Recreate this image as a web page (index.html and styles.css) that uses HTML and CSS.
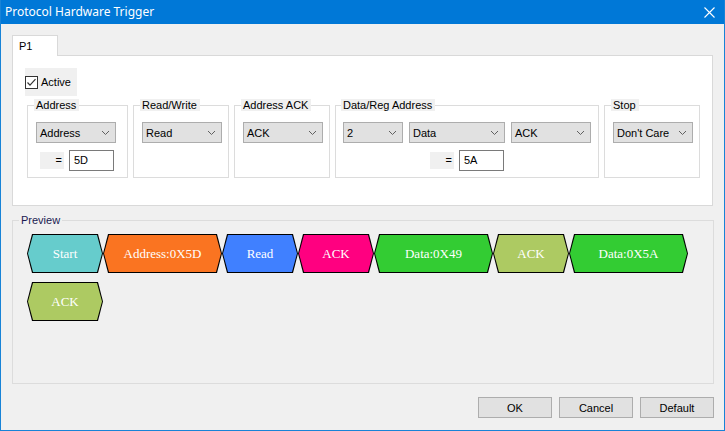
FILE: index.html
```html
<!DOCTYPE html>
<html>
<head>
<meta charset="utf-8">
<link rel="stylesheet" href="styles.css">
</head>
<body>
<div class="window">
  <div class="titlebar">
    <span class="title">Protocol Hardware Trigger</span>
    <svg class="close" width="11" height="11" viewBox="0 0 11 11"><path d="M0.5 0.5L10.5 10.5M10.5 0.5L0.5 10.5" stroke="#fff" stroke-width="1.1" fill="none"/></svg>
  </div>
  <div class="body">
    <div class="tabstrip"><div class="tab">P1</div><div class="tabfill"></div></div>
    <div class="panel">
      <div class="check"><span class="box"><svg width="11" height="11" viewBox="0 0 11 11"><path d="M1.5 5.5L4 8.2L9.5 2.2" stroke="#333" stroke-width="1.2" fill="none"/></svg></span>Active</div>
      <div class="groups">
        <fieldset class="grp g-addr">
          <legend>Address</legend>
          <div class="combo w80"><span>Address</span><svg class="chev" width="7" height="4" viewBox="0 0 7 4"><path d="M0 0L3.5 3.5L7 0" stroke="#606060" fill="none"/></svg></div>
          <div class="eqrow"><span class="eq">=</span><span class="field">5D</span></div>
        </fieldset>
        <fieldset class="grp g-rw">
          <legend>Read/Write</legend>
          <div class="combo w80"><span>Read</span><svg class="chev" width="7" height="4" viewBox="0 0 7 4"><path d="M0 0L3.5 3.5L7 0" stroke="#606060" fill="none"/></svg></div>
        </fieldset>
        <fieldset class="grp g-ack">
          <legend>Address ACK</legend>
          <div class="combo w80"><span>ACK</span><svg class="chev" width="7" height="4" viewBox="0 0 7 4"><path d="M0 0L3.5 3.5L7 0" stroke="#606060" fill="none"/></svg></div>
        </fieldset>
        <fieldset class="grp g-data">
          <legend>Data/Reg Address</legend>
          <div class="combos">
            <div class="combo w60"><span>2</span><svg class="chev" width="7" height="4" viewBox="0 0 7 4"><path d="M0 0L3.5 3.5L7 0" stroke="#606060" fill="none"/></svg></div>
            <div class="combo w96"><span>Data</span><svg class="chev" width="7" height="4" viewBox="0 0 7 4"><path d="M0 0L3.5 3.5L7 0" stroke="#606060" fill="none"/></svg></div>
            <div class="combo w80"><span>ACK</span><svg class="chev" width="7" height="4" viewBox="0 0 7 4"><path d="M0 0L3.5 3.5L7 0" stroke="#606060" fill="none"/></svg></div>
          </div>
          <div class="eqrow eq-data"><span class="eq">=</span><span class="field">5A</span></div>
        </fieldset>
        <fieldset class="grp g-stop">
          <legend>Stop</legend>
          <div class="combo w80"><span>Don't Care</span><svg class="chev" width="7" height="4" viewBox="0 0 7 4"><path d="M0 0L3.5 3.5L7 0" stroke="#606060" fill="none"/></svg></div>
        </fieldset>
      </div>
    </div>
    <fieldset class="preview">
      <legend>Preview</legend>
      <div class="blocks">
        <div class="blk short"><span class="c-start">Start</span></div>
        <div class="blk long"><span class="c-addr">Address:0X5D</span></div>
        <div class="blk short"><span class="c-read">Read</span></div>
        <div class="blk short"><span class="c-ack">ACK</span></div>
        <div class="blk long"><span class="c-data">Data:0X49</span></div>
        <div class="blk short"><span class="c-ack2">ACK</span></div>
        <div class="blk long"><span class="c-data">Data:0X5A</span></div>
        <div class="blk short"><span class="c-ack2">ACK</span></div>
      </div>
    </fieldset>
    <div class="buttons">
      <div class="btn">OK</div>
      <div class="btn">Cancel</div>
      <div class="btn">Default</div>
    </div>
  </div>
</div>
</body>
</html>
```
FILE: styles.css
```css
* { box-sizing: border-box; }
html, body { margin: 0; padding: 0; background: #f0f0f0; }

.window {
  width: 725px;
  height: 431px;
  background: #f0f0f0;
  border: 1px solid #1883d7;
  border-top: 0;
  display: flex;
  flex-direction: column;
  font-family: "Liberation Sans", Arial, sans-serif;
  font-size: 11px;
  color: #000;
}

.titlebar {
  height: 24px;
  flex: none;
  background: #0078d7;
  display: flex;
  align-items: center;
  justify-content: space-between;
  padding: 0 9px 0 4px;
  color: #fff;
}
.title { font-family: "Noto Sans", "Liberation Sans", sans-serif; font-size: 12px; line-height: 16px; }
.close { display: block; }

.body {
  flex: 1;
  display: flex;
  flex-direction: column;
  padding: 11px 10px 12px 11px;
  min-height: 0;
}

.tabstrip { display: flex; height: 21px; flex: none; margin-right: 1px; }
.tab {
  width: 46px;
  background: #fff;
  border: 1px solid #d9d9d9;
  border-bottom: 0;
  padding: 4px 0 0 6px;
  line-height: 13px;
}
.tabfill { flex: 1; border-bottom: 1px solid #d9d9d9; }

.panel {
  height: 150px;
  flex: none;
  margin-right: 1px;
  background: #fff;
  border: 1px solid #d9d9d9;
  border-top: 0;
  padding: 12px 12px 0 12px;
}

.check {
  width: 52px;
  height: 28px;
  background: #f0f0f0;
  display: flex;
  align-items: center;
}
.box {
  width: 13px;
  height: 13px;
  border: 1px solid #333;
  background: #fff;
  margin-right: 3px;
  display: flex;
  align-items: center;
  justify-content: center;
}
.box svg { display: block; }

.groups { display: flex; gap: 5px; margin: 3px 0 0 2px; }

fieldset { margin: 0; min-width: 0; }
.grp {
  border: 1px solid #dcdcdc;
  padding: 11px 6px 6px 8px;
}
.grp legend {
  padding: 0 3px 0 2px;
  margin-left: -2px;
  background: #f0f0f0;
  line-height: 12px;
}
.g-addr { width: 101px; }
.g-rw, .g-ack, .g-stop { width: 96px; }
.g-data { width: 264px; padding-left: 7px; }

.combos { display: flex; gap: 6px; }
.combo {
  height: 21px;
  background: #e1e1e1;
  border: 1px solid #adadad;
  display: flex;
  align-items: center;
  justify-content: space-between;
  padding: 0 6px 0 3px;
  white-space: nowrap;
}
.chev { display: block; flex: none; }
.w80 { width: 80px; }
.w60 { width: 60px; }
.w96 { width: 96px; }

.eqrow { display: flex; align-items: center; gap: 5px; margin: 7px 0 0 4px; }
.eq-data { margin-left: 87px; }
.eq {
  width: 24px;
  height: 17px;
  background: #f0f0f0;
  text-align: right;
  padding-right: 2px;
  line-height: 17px;
}
.field {
  width: 45px;
  height: 21px;
  border: 1px solid #7a7a7a;
  background: #fff;
  padding-left: 4px;
  line-height: 19px;
}

.preview {
  flex: 1;
  margin-top: 8px;
  border: 1px solid #dcdcdc;
  padding: 7px 8px 0 14px;
  min-height: 0;
}
.preview legend {
  padding: 0 2px;
  margin-left: -8px;
  line-height: 13px;
  color: #1a1a50;
}

.blocks { display: flex; flex-wrap: wrap; row-gap: 9px; }
.blk {
  height: 39px;
  padding: 1px;
  background: #000;
  display: flex;
  clip-path: polygon(5px 0, calc(100% - 5px) 0, 100% 50%, calc(100% - 5px) 100%, 5px 100%, 0 50%);
}
.blk.short { width: 76px; }
.blk.long { width: 119px; }
.blk span {
  flex: 1;
  display: flex;
  align-items: center;
  justify-content: center;
  color: #fff;
  font-family: "Liberation Serif", "Times New Roman", serif;
  font-size: 13px;
  clip-path: polygon(5px 0, calc(100% - 5px) 0, 100% 50%, calc(100% - 5px) 100%, 5px 100%, 0 50%);
}
.c-start { background: #66cccc; }
.c-addr { background: #fa7421; }
.c-read { background: #4080ff; }
.c-ack { background: #ff0080; }
.c-data { background: #33cc33; }
.c-ack2 { background: #adca62; }

.buttons { display: flex; justify-content: flex-end; gap: 7px; margin-top: 13px; flex: none; }
.btn {
  width: 74px;
  height: 21px;
  background: #e1e1e1;
  border: 1px solid #adadad;
  display: flex;
  align-items: center;
  justify-content: center;
}
```
